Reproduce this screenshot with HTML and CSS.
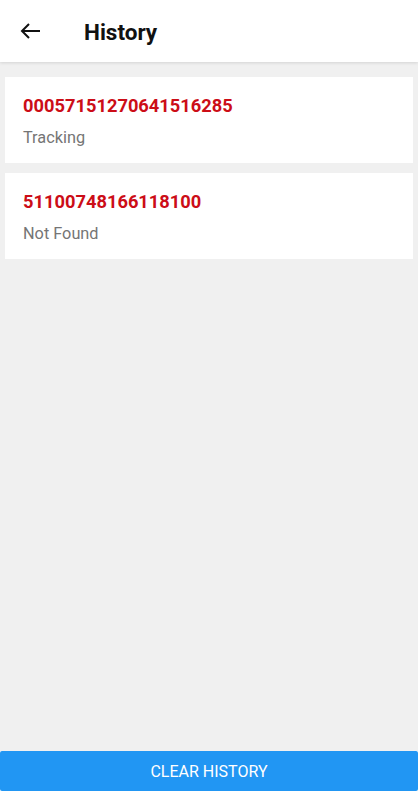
FILE: index.html
```html
<!DOCTYPE html>
<html lang="en">
<head>
    <meta charset="UTF-8">
    <meta name="viewport" content="width=device-width, initial-scale=1.0">
    <title>History</title>
    <link rel="stylesheet" href="styles.css">
</head>
<body>
    <div class="app">
        <header class="toolbar">
            <button class="back-btn" type="button" aria-label="Back">
                <svg width="24" height="24" viewBox="0 0 24 24">
                    <path d="M3 12H21M10 5L3 12L10 19" fill="none" stroke="#111" stroke-width="2"/>
                </svg>
            </button>
            <h1 class="title">History</h1>
        </header>

        <main class="history-list">
            <div class="history-item">
                <div class="tracking-no">00057151270641516285</div>
                <div class="status">Tracking</div>
            </div>
            <div class="history-item">
                <div class="tracking-no">51100748166118100</div>
                <div class="status">Not Found</div>
            </div>
        </main>

        <div class="footer">
            <button class="clear-btn" type="button">CLEAR HISTORY</button>
        </div>
    </div>
</body>
</html>
```

FILE: styles.css
```css
html, body { margin: 0; padding: 0; height: 100%; }
body { font-family: Roboto, "Noto Sans", Arial, sans-serif; background: #fff; }

.app { display: flex; flex-direction: column; height: 800px; background: #f0f0f0; }

.toolbar { display: flex; align-items: center; height: 62px; padding-left: 19px; background: #fff; box-shadow: 0 1px 3px rgba(0,0,0,0.12); position: relative; z-index: 1; }
.back-btn { display: flex; padding: 0; border: none; background: none; cursor: pointer; }
.title { margin: 2px 0 0 41px; font-size: 22.5px; line-height: 28px; font-weight: bold; color: #111; }

.history-list { flex: 1; display: flex; flex-direction: column; gap: 10px; padding: 15px 5px; }
.history-item { background: #fff; padding: 17px 18px 14px; }
.tracking-no { font-size: 18.3px; line-height: 24px; font-weight: bold; color: #cc0d17; }
.status { margin-top: 9px; font-size: 16.3px; line-height: 22px; color: #757575; }

.footer { background: #fff; padding-bottom: 9px; }
.clear-btn { display: block; width: 100%; height: 40px; border: none; border-radius: 2px; background: #2196f3; color: #fff; font-family: Roboto, Arial, sans-serif; font-size: 16px; cursor: pointer; }
```
